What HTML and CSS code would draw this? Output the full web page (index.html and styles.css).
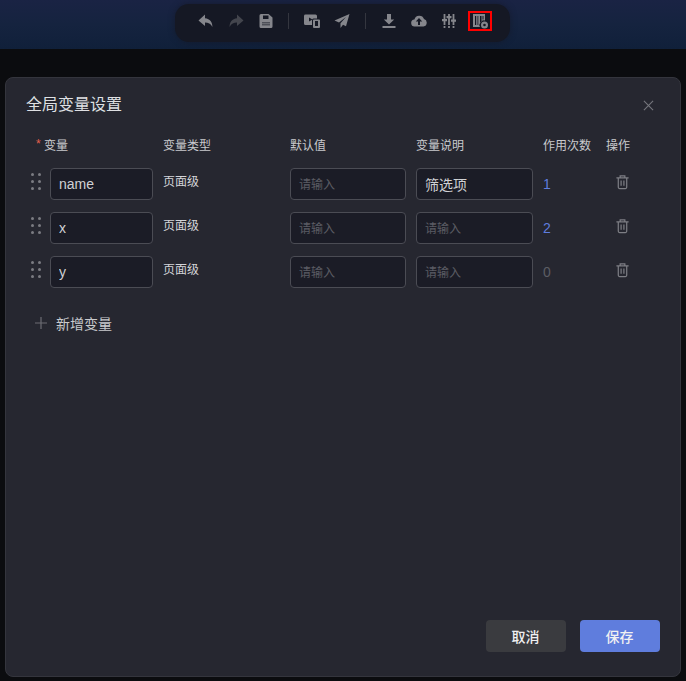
FILE: index.html
```html
<!DOCTYPE html>
<html lang="zh">
<head>
<meta charset="utf-8">
<title>全局变量设置</title>
<link rel="stylesheet" href="styles.css">
</head>
<body>
<header class="topbar">
  <nav class="toolbar">
    <svg class="tool" viewBox="0 0 16 16"><path d="M7 1.500 0.500 7.500 7 13V9.600c3.400 0 5.600 1.100 7.400 4.400 .1-5-2.400-8.300-7.400-8.800z"/></svg>
    <svg class="tool dim" viewBox="0 0 16 16"><path d="M9 1.500l6.500 6L9 13V9.600c-3.400 0-5.600 1.100-7.400 4.400 -.1-5 2.400-8.300 7.400-8.800z"/></svg>
    <svg class="tool" viewBox="0 0 16 16"><path fill-rule="evenodd" d="M3 1h7.500L14.500 4.500V13.500a1.500 1.500 0 0 1-1.500 1.500H3a1.500 1.500 0 0 1-1.500-1.500V2.500A1.500 1.500 0 0 1 3 1zM5 2.500v3.500h5.500V2.500zM4 9.500v.8h8v-.8zM4 11.500v.8h8v-.8z"/></svg>
    <span class="sep first"></span>
    <svg class="tool" viewBox="0 0 16 16"><path fill-rule="evenodd" d="M1.500 1.500h10A1.500 1.500 0 0 1 13 3V5.500H9.500A1.500 1.500 0 0 0 8 7V12H1.500A1.500 1.500 0 0 1 0 10.500V3A1.500 1.500 0 0 1 1.500 1.500zM5 4.500v4l3.500-2z"/><path fill-rule="evenodd" d="M10 6.500h5a1 1 0 0 1 1 1V14a1 1 0 0 1-1 1h-5a1 1 0 0 1-1-1V7.500a1 1 0 0 1 1-1zm1 1.500v5h3V8z"/></svg>
    <svg class="tool" viewBox="0 0 16 16"><path d="M15.500 1 .5 7.500l4.500 2 7-5.500-5.500 6.200v4.800l2.500-3.300 3 1.500z"/></svg>
    <span class="sep"></span>
    <svg class="tool" viewBox="0 0 16 16"><path d="M6 1h4v5.500h3.200L8 11.500 2.800 6.500H6zM1.500 13h13v2h-13z"/></svg>
    <svg class="tool" viewBox="0 0 16 16"><path fill-rule="evenodd" d="M4 13.500a3.500 3.500 0 0 1-.6-7A5 5 0 0 1 13 6.100a3.800 3.800 0 0 1-.500 7.400zM8 5 4.800 8.500H7V12h2V8.500h2.200z"/></svg>
    <svg class="tool" viewBox="0 0 16 16"><path d="M2.600 1h1.800v5H6v2.200H4.400V12H2.600V8.200H1V6h1.600zM7.100 1h1.800v2H10.500v2.200H8.900V12H7.100V5.200H5.500V3h1.600zM11.600 1h1.800v5.500H15v2.200h-1.600V12h-1.800V8.700H10V6.500h1.600zM2.600 13h1.800v2H2.600zM7.100 13h1.800v2H7.100zM11.600 13h1.800v2h-1.800z"/></svg>
    <span class="tool-active">
      <svg class="tool-inner" viewBox="0 0 16 16"><path d="M1 1h12v6.500a4.500 4.500 0 0 0-5 6.500H1zM3 3v9h1.200V3zM5.500 3v9h.8V3zM8 3v6h1.500V3zM10.500 3v3.500h1V3z" fill-rule="evenodd"/><path fill-rule="evenodd" d="M12.500 8.500a3.500 3.500 0 1 1 0 7 3.500 3.500 0 0 1 0-7zm0 2.200a1.300 1.300 0 1 0 0 2.600 1.300 1.300 0 0 0 0-2.600z"/></svg>
    </span>
  </nav>
</header>
<main class="modal">
  <div class="modal-head">
    <h1 class="modal-title">全局变量设置</h1>
    <svg class="close" viewBox="0 0 12 12"><path d="M1 1l10 10M11 1 1 11"/></svg>
  </div>
  <div class="table">
    <div class="row head">
      <div class="c-name"><span class="req">*</span>变量</div>
      <div>变量类型</div>
      <div>默认值</div>
      <div>变量说明</div>
      <div>作用次数</div>
      <div>操作</div>
    </div>
    <div class="row">
      <div class="c-name"><span class="drag"><i></i><i></i><i></i><i></i><i></i><i></i></span><input class="field name-field" value="name"></div>
      <div class="type">页面级</div>
      <div><input class="field w-default" placeholder="请输入"></div>
      <div><input class="field w-desc" value="筛选项"></div>
      <div class="count link">1</div>
      <div class="ops"><svg class="trash" viewBox="0 0 16 16"><path d="M1.500 3.500h13M5.500 3.500V1.500h5v2M3.500 3.500v10.200a1.300 1.300 0 0 0 1.300 1.300h6.400a1.300 1.300 0 0 0 1.300-1.300V3.500M6.500 6.500v5.500M9.500 6.500v5.500"/></svg></div>
    </div>
    <div class="row">
      <div class="c-name"><span class="drag"><i></i><i></i><i></i><i></i><i></i><i></i></span><input class="field name-field" value="x"></div>
      <div class="type">页面级</div>
      <div><input class="field w-default" placeholder="请输入"></div>
      <div><input class="field w-desc" placeholder="请输入"></div>
      <div class="count link">2</div>
      <div class="ops"><svg class="trash" viewBox="0 0 16 16"><path d="M1.500 3.500h13M5.500 3.500V1.500h5v2M3.500 3.500v10.200a1.300 1.300 0 0 0 1.300 1.300h6.400a1.300 1.300 0 0 0 1.300-1.300V3.500M6.500 6.500v5.500M9.500 6.500v5.500"/></svg></div>
    </div>
    <div class="row">
      <div class="c-name"><span class="drag"><i></i><i></i><i></i><i></i><i></i><i></i></span><input class="field name-field" value="y"></div>
      <div class="type">页面级</div>
      <div><input class="field w-default" placeholder="请输入"></div>
      <div><input class="field w-desc" placeholder="请输入"></div>
      <div class="count zero">0</div>
      <div class="ops"><svg class="trash" viewBox="0 0 16 16"><path d="M1.500 3.500h13M5.500 3.500V1.500h5v2M3.500 3.500v10.200a1.300 1.300 0 0 0 1.300 1.300h6.400a1.300 1.300 0 0 0 1.300-1.300V3.500M6.500 6.500v5.500M9.500 6.500v5.500"/></svg></div>
    </div>
  </div>
  <div class="add">
    <svg class="plus" viewBox="0 0 12 12"><path d="M6 0v12M0 6h12"/></svg>
    <span>新增变量</span>
  </div>
  <div class="spacer"></div>
  <footer class="foot">
    <button class="btn cancel">取消</button>
    <button class="btn save">保存</button>
  </footer>
</main>
</body>
</html>
```
FILE: styles.css
```css
* { box-sizing: border-box; }
html, body { margin: 0; height: 681px; overflow: hidden; }
body {
  background: #0b0c0f;
  font-family: "Liberation Sans", "Noto Sans CJK SC", sans-serif;
  color: #d4d5d9;
  display: flex;
  flex-direction: column;
}
.topbar {
  height: 49px;
  flex: none;
  background: linear-gradient(180deg, #1a2344 0%, #15233f 50%, #10203a 100%);
  display: flex;
  justify-content: center;
  padding-top: 4px;
}
.toolbar {
  width: 335px;
  height: 38px;
  margin-left: -1px;
  background: #151824;
  box-shadow: 0 0 6px rgba(20, 22, 34, 0.6);
  border-radius: 14px;
  display: flex;
  align-items: center;
  padding: 0 19px 5px 23px;
  gap: 14px;
}
.tool { width: 16px; height: 16px; fill: #85868c; flex: none; filter: blur(0.3px); }
.tool.dim { fill: #43454d; }
.sep { width: 1px; height: 16px; background: #34363f; margin: 0 1px; flex: none; }
.sep.first { margin-left: 0; }
.tool-active {
  width: 24px;
  height: 20px;
  margin-left: -3px;
  border: 2px solid #f00;
  display: flex;
  align-items: center;
  justify-content: center;
  flex: none;
}
.tool-inner { width: 16px; height: 16px; fill: #85868c; filter: blur(0.3px); }
.modal {
  width: 675.5px;
  height: 600px;
  margin: 28px 0 0 5px;
  background: #262730;
  border: 1px solid #34353d;
  border-radius: 8px;
  display: flex;
  flex-direction: column;
  padding: 0 20px 24px 20px;
}
.modal-head {
  display: flex;
  justify-content: space-between;
  align-items: center;
  height: 54px;
  padding-right: 6px;
}
.modal-title { margin: 0; font-size: 16px; font-weight: 400; line-height: 52px; color: #dfe0e3; }
.close { width: 11px; height: 11px; fill: none; stroke: #75767c; stroke-width: 1.200; margin-top: 0; }
.table { display: flex; flex-direction: column; gap: 12px; }
.row {
  display: grid;
  grid-template-columns: 137px 127px 126px 127px 63px 1fr;
  height: 32px;
  font-size: 12px;
}
.row.head { height: 24px; align-items: center; color: #c9cacd; }
.c-name { display: flex; align-items: flex-start; }
.head .c-name { padding-left: 10px; align-items: center; }
.req { color: #e5604d; width: 8px; font-size: 12px; }
.drag {
  width: 11px;
  margin: 5px 8px 0 5px;
  display: grid;
  grid-template-columns: 3px 3px;
  column-gap: 4px;
  row-gap: 4px;
}
.drag i { width: 3px; height: 3px; background: #7b7c82; border-radius: 50%; }
.field {
  height: 32px;
  background: #1b1c26;
  border: 1px solid #4b4c54;
  border-radius: 4px;
  padding: 0 8px;
  font: 14px "Liberation Sans", "Noto Sans CJK SC", sans-serif;
  color: #d0d1d4;
  outline: none;
  display: block;
}
.field::placeholder { color: #5c5d64; font-size: 12px; opacity: 1; }
.name-field { width: 103px; }
.w-default { width: 116px; }
.w-desc { width: 117px; }
.type { line-height: 28px; }
.count { font-size: 14px; line-height: 33px; }
.link { color: #5f7ddd; }
.zero { color: #5c5d64; }
.ops { padding-left: 9px; padding-top: 6px; }
.trash { width: 15px; height: 16px; fill: none; stroke: #7d7e84; stroke-width: 1.300; display: block; }
.add {
  display: flex;
  align-items: center;
  margin: 23px 0 0 9px;
  height: 24px;
  font-size: 14px;
  color: #c9cacd;
  gap: 9px;
}
.plus { width: 12px; height: 12px; fill: none; stroke: #6c6d73; stroke-width: 1.200; }
.spacer { flex: 1; }
.foot { display: flex; justify-content: flex-end; gap: 14px; }
.btn {
  width: 80px;
  height: 32px;
  border: 0;
  border-radius: 4px;
  font: 500 14px "Liberation Sans", "Noto Sans CJK SC", sans-serif;
  color: #f0f0f2;
}
.cancel { background: #3a3b3f; }
.save { background: #5f7ddd; }
```
